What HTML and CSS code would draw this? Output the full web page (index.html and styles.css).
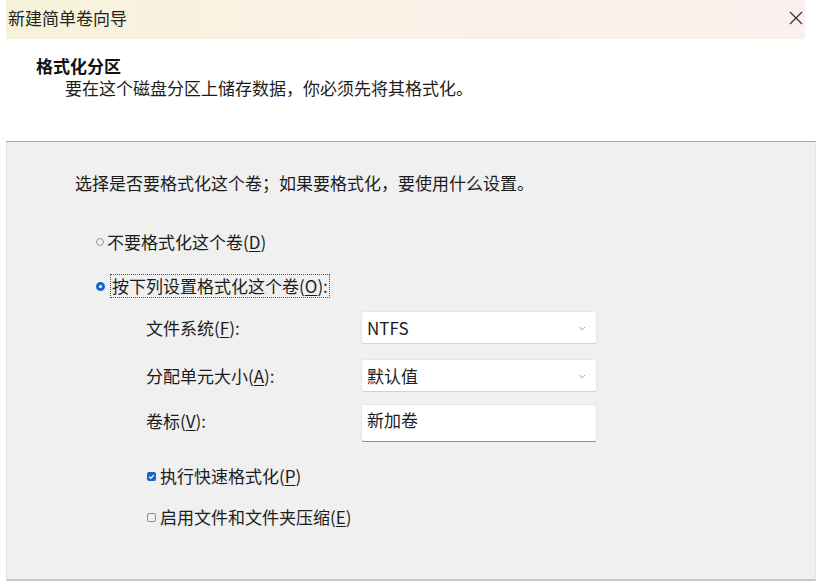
FILE: index.html
```html
<!DOCTYPE html>
<html lang="zh-CN">
<head>
  <meta charset="UTF-8" />
  <meta name="viewport" content="width=device-width, initial-scale=1.0"/>
  <title>新建简单卷向导</title>
  <link rel="stylesheet" href="styles.css">
</head>
<body>

  <div class="window">
    <div class="titlebar">
      <span class="title">新建简单卷向导</span>
      <svg class="close" width="14" height="14" viewBox="0 0 14 14">
        <path d="M1 1 L13 13 M13 1 L1 13" stroke="#333" stroke-width="1.2" fill="none"/>
      </svg>
    </div>

    <div class="header">
      <div class="heading">格式化分区</div>
      <div class="subtitle">要在这个磁盘分区上储存数据，你必须先将其格式化。</div>
    </div>

    <div class="content">
      <div class="intro">选择是否要格式化这个卷；如果要格式化，要使用什么设置。</div>

      <div class="radio-row first">
        <span class="radio"></span>
        <span class="label">不要格式化这个卷(<u>D</u>)</span>
      </div>
      <div class="radio-row">
        <span class="radio checked"></span>
        <span class="label focus">按下列设置格式化这个卷(<u>O</u>):</span>
      </div>

      <!-- format settings -->
      <div class="fields">
        <div class="field row1">
          <span class="field-label">文件系统(<u>F</u>):</span>
          <div class="dropdown">
            <span>NTFS</span>
            <svg width="8" height="5" viewBox="0 0 8 5"><path d="M1 1 L4 4 L7 1" stroke="#aaa" fill="none"/></svg>
          </div>
        </div>
        <div class="field row2">
          <span class="field-label">分配单元大小(<u>A</u>):</span>
          <div class="dropdown">
            <span>默认值</span>
            <svg width="8" height="5" viewBox="0 0 8 5"><path d="M1 1 L4 4 L7 1" stroke="#aaa" fill="none"/></svg>
          </div>
        </div>
        <div class="field row3">
          <span class="field-label">卷标(<u>V</u>):</span>
          <div class="textbox">新加卷</div>
        </div>
      </div>

      <div class="check-row first">
        <span class="checkbox checked">
          <svg width="9" height="9" viewBox="0 0 9 9"><path d="M2 4.6 L3.8 6.3 L7 2.8" stroke="#fff" stroke-width="1.2" fill="none"/></svg>
        </span>
        <span class="label">执行快速格式化(<u>P</u>)</span>
      </div>
      <div class="check-row">
        <span class="checkbox"></span>
        <span class="label">启用文件和文件夹压缩(<u>E</u>)</span>
      </div>
    </div>
  </div>

</body>
</html>
```

FILE: styles.css
```css
body {
  margin: 0;
  background-color: #fff;
  font-family: "Noto Sans CJK SC", "Noto Sans", sans-serif;
  font-size: 17px;
  line-height: 22px;
  color: #1c1c1c;
}

u {
  text-underline-offset: 2px;
}

.window {
  width: 810px;
  margin-left: 6px;
}

.titlebar {
  height: 39px;
  margin-right: 11px;
  padding: 0 2px 0 2px;
  display: flex;
  align-items: center;
  justify-content: space-between;
  background: linear-gradient(90deg, #f6f3da 0%, #f9f2e6 45%, #faf0ee 100%);
}

.title {
  color: #222;
  margin-top: -3px;
}

.close {
  margin-top: -3px;
}

.header {
  height: 103px;
  padding-top: 16px;
  padding-left: 30px;
  box-sizing: border-box;
  background-color: #fff;
  border-bottom: 1px solid #a8a8a8;
}

.heading {
  font-weight: bold;
  color: #111;
}

.subtitle {
  margin-left: 29px;
  margin-top: 0;
}

.content {
  height: 439px;
  box-sizing: border-box;
  padding-top: 30px;
  padding-left: 68px;
  background-color: #f0f0f0;
  border-left: 1px solid #e2e2e2;
  border-right: 1px solid #e2e2e2;
  border-bottom: 2px solid #c6c6c6;
}

.radio-row {
  display: flex;
  align-items: center;
  margin-left: 21px;
  margin-top: 21px;
}

.radio-row.first {
  margin-top: 37px;
}

.radio {
  width: 8px;
  height: 8px;
  border: 1px solid #9a9a9a;
  border-radius: 50%;
  box-sizing: border-box;
  margin-right: 3px;
}

.radio.checked {
  width: 9px;
  height: 9px;
  border: 3px solid #1b65c2;
  background-color: #fff;
  margin-right: 6px;
}

.label.focus {
  border: 1px dotted #555;
  padding: 0 1px;
  margin-left: -1px;
}

.fields {
  margin-left: 71px;
  margin-top: 13px;
}

.field {
  display: flex;
  align-items: flex-start;
}

.field-label {
  width: 215px;
  padding-top: 6px;
}

.row2 {
  margin-top: 15px;
}

.row3 {
  margin-top: 12px;
}

.dropdown,
.textbox {
  width: 236px;
  height: 33px;
  box-sizing: border-box;
  background-color: #fff;
  border: 1px solid #e6e6e6;
  border-bottom-color: #d2d2d2;
  border-radius: 3px;
  padding-left: 5px;
  padding-top: 5px;
}

.dropdown {
  display: flex;
  justify-content: space-between;
  padding-right: 10px;
}

.dropdown svg {
  margin-top: 9px;
}

.textbox {
  height: 38px;
  padding-top: 4px;
  border-bottom: 1px solid #8c8c8c;
}

.check-row {
  display: flex;
  align-items: center;
  margin-left: 72px;
  margin-top: 19px;
}

.check-row.first {
  margin-top: 23px;
}

.checkbox {
  width: 9px;
  height: 9px;
  box-sizing: border-box;
  border: 1px solid #8e8e8e;
  border-radius: 2px;
  margin-right: 4px;
  display: flex;
}

.checkbox.checked {
  border: none;
  background-color: #1b65c2;
}
```
